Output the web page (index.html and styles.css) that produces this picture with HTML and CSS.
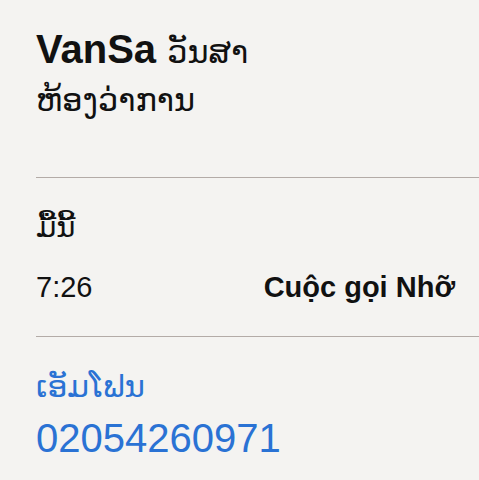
FILE: index.html
```html
<!DOCTYPE html>
<html>

<head>
  <title>VanSa</title>
  <link rel="stylesheet" href="styles.css">
</head>

<body>
  <div class="container">
    <div class="section header">
      <h1 class="name"><b>VanSa</b> <span class="name-lao">ວັນສາ</span></h1>
      <p class="org">ຫ້ອງວ່າການ</p>
    </div>

    <div class="section call">
      <p class="day">ມື້ນີ້</p>
      <div class="call-row">
        <span class="time">7:26</span>
        <span class="status">Cuộc gọi Nhỡ</span>
      </div>
    </div>

    <div class="section phone">
      <p class="phone-label">ເອັມໂຟນ</p>
      <p class="phone-number">02054260971</p>
    </div>
  </div>
</body>

</html>
```

FILE: styles.css
```css
body {
  font-family: "Liberation Sans", "DejaVu Sans", sans-serif;
  background-color: #f4f3f1;
  color: #111;
  margin: 0;
  padding: 0;
}

.container {
  padding-left: 36px;
}

.section {
  border-bottom: 1px solid #b3aba7;
}

.section:last-child {
  border-bottom: none;
}

p {
  margin: 0;
}

.header {
  padding: 25px 0 57px;
}

.name {
  font-size: 40px;
  font-weight: normal;
  line-height: 48px;
  margin: 0;
}

.name b {
  font-weight: bold;
}

.name-lao {
  font-size: 32px;
}

.org {
  font-size: 32px;
  line-height: 40px;
  margin-top: 4px;
}

.call {
  padding: 29px 24px 29px 0;
}

.day {
  font-size: 29px;
  line-height: 40px;
}

.call-row {
  display: flex;
  justify-content: space-between;
  align-items: baseline;
  margin-top: 20px;
  font-size: 29px;
  line-height: 40px;
}

.status {
  font-weight: bold;
}

.phone {
  padding-top: 30px;
  color: #2a72d4;
}

.phone-label {
  font-size: 31px;
  line-height: 40px;
}

.phone-number {
  font-size: 40px;
  line-height: 52px;
  margin-top: 5px;
}
```
